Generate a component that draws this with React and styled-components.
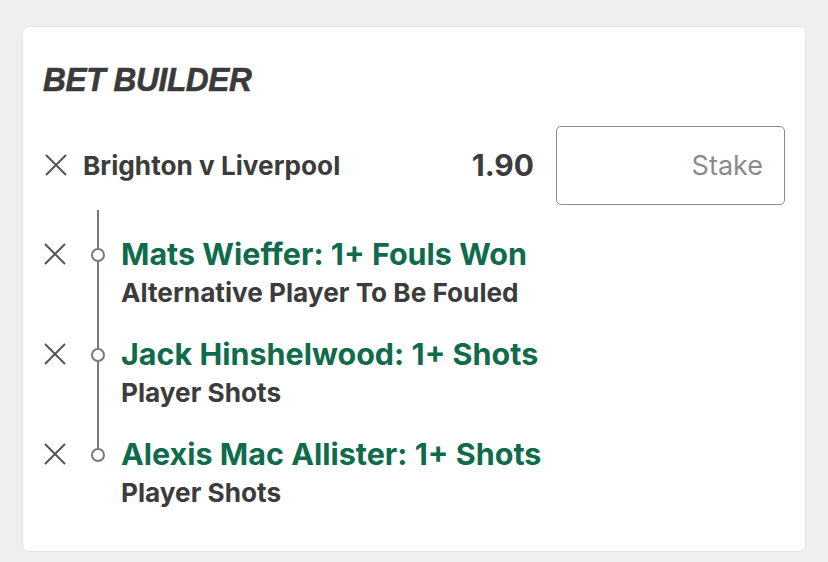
import React from "react";
import styled, { createGlobalStyle } from "styled-components";

const GlobalStyle = createGlobalStyle`
  html, body {
    margin: 0;
    padding: 0;
    background: #efefef;
  }
  body {
    font-family: Inter, "Open Sans", "Liberation Sans", sans-serif;
    color: #3c3c3c;
  }
`;

const Page = styled.div`
  padding: 26px 22px 10px;
`;

const Card = styled.div`
  background: #fff;
  border: 1px solid #e3e3e3;
  border-radius: 7px;
  padding: 32px 20px 37px;
  box-sizing: border-box;
  height: 526px;
`;

const Title = styled.h2`
  margin: 0;
  font-family: "Liberation Sans", sans-serif;
  font-style: italic;
  font-weight: 700;
  font-size: 34px;
  line-height: 40px;
  letter-spacing: -0.4px;
  color: #3a3a3a;
  -webkit-text-stroke: 0.6px #3a3a3a;
  display: inline-block;
  transform: scaleX(0.93);
  transform-origin: left center;
`;

const HeaderRow = styled.div`
  display: flex;
  align-items: center;
  margin-top: 27px;
  height: 78px;
`;

const CloseButton = styled.button`
  flex: none;
  width: 24px;
  height: 24px;
  padding: 0;
  border: 0;
  background: none;
  display: flex;
  align-items: center;
  justify-content: center;
  margin-left: ${({ $inset }) => $inset || 0}px;
`;

const MatchName = styled.span`
  margin-left: 15px;
  font-weight: 650;
  font-size: 26.2px;
  flex: 1;
`;

const Odds = styled.span`
  font-weight: 700;
  font-size: 30px;
  margin-right: 22px;
`;

const StakeInput = styled.input`
  width: 229px;
  height: 79px;
  box-sizing: border-box;
  border: 1.5px solid #8c8c8c;
  border-radius: 5px;
  padding: 0 21px;
  text-align: right;
  font-family: Inter, "Liberation Sans", sans-serif;
  font-size: 27px;
  outline: none;
  &::placeholder {
    color: #8a8a8a;
  }
`;

const Legs = styled.div`
  margin-top: 10px;
`;

const Leg = styled.div`
  display: flex;
  height: 100px;
`;

const LegClose = styled.div`
  flex: none;
  width: 24px;
  padding-top: 29px;
  margin-left: 1px;
`;

const Timeline = styled.div`
  flex: none;
  position: relative;
  width: 24px;
  margin-left: 18px;
  &::before {
    content: "";
    position: absolute;
    left: 11px;
    width: 2px;
    top: ${({ $first }) => ($first ? -4 : 0)}px;
    height: ${({ $last }) => ($last ? "40px" : "auto")};
    bottom: ${({ $last }) => ($last ? "auto" : "0")};
    background: #7a7a7a;
  }
  &::after {
    content: "";
    position: absolute;
    left: 5px;
    top: 34px;
    width: 10px;
    height: 10px;
    border: 2px solid #7a7a7a;
    border-radius: 50%;
    background: #fff;
  }
`;

const LegText = styled.div`
  margin-left: 11px;
  padding-top: 21px;
`;

const Selection = styled.div`
  color: #0f6b4c;
  font-weight: 700;
  font-size: 30.5px;
  line-height: 38px;
`;

const Market = styled.div`
  font-weight: 650;
  font-size: 26.2px;
  line-height: 40px;
`;

const CrossIcon = ({ size = 22 }) => (
  <svg width={size} height={size} viewBox="0 0 22 22">
    <path
      d="M1 1 L21 21 M21 1 L1 21"
      stroke="#555"
      strokeWidth="2"
      strokeLinecap="butt"
      fill="none"
    />
  </svg>
);

const legs = [
  { selection: "Mats Wieffer: 1+ Fouls Won", market: "Alternative Player To Be Fouled" },
  { selection: "Jack Hinshelwood: 1+ Shots", market: "Player Shots" },
  { selection: "Alexis Mac Allister: 1+ Shots", market: "Player Shots" },
];

export default function App() {
  return (
    <>
      <GlobalStyle />
      <Page>
        <Card>
          <Title>BET BUILDER</Title>
          <HeaderRow>
            <CloseButton $inset={1}>
              <CrossIcon />
            </CloseButton>
            <MatchName>Brighton v Liverpool</MatchName>
            <Odds>1.90</Odds>
            <StakeInput placeholder="Stake" />
          </HeaderRow>
          <Legs>
            {legs.map((leg, i) => (
              <Leg key={i}>
                <LegClose>
                  <CrossIcon />
                </LegClose>
                <Timeline $first={i === 0} $last={i === legs.length - 1} />
                <LegText>
                  <Selection>{leg.selection}</Selection>
                  <Market>{leg.market}</Market>
                </LegText>
              </Leg>
            ))}
          </Legs>
        </Card>
      </Page>
    </>
  );
}
